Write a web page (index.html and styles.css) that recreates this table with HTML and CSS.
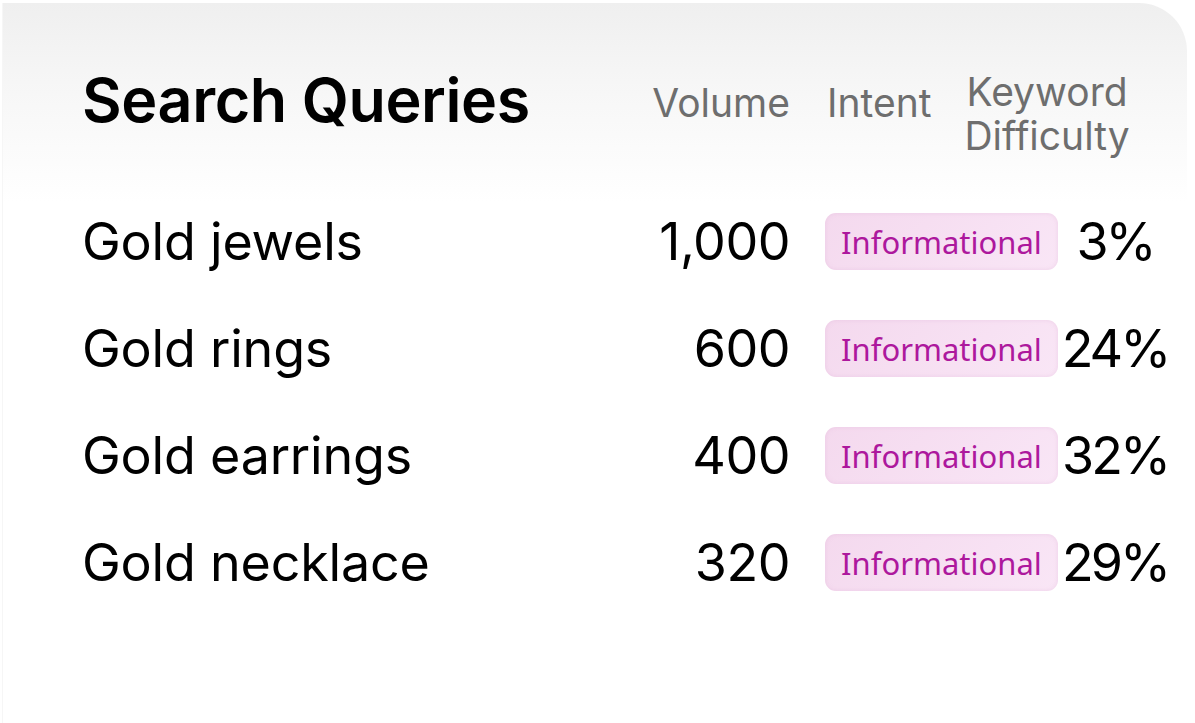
FILE: index.html
```html
<!DOCTYPE html>
<html>
<head>
<meta charset="utf-8">
<link rel="stylesheet" href="styles.css">
</head>
<body>
<div class="card">
  <div class="grid head">
    <h1 class="title">Search Queries</h1>
    <div class="h-vol">Volume</div>
    <div class="h-rest">
      <span class="h-intent">Intent</span>
      <span class="h-kd">Keyword<br>Difficulty</span>
    </div>
  </div>
  <div class="grid row">
    <div class="name">Gold jewels</div>
    <div class="vol">1,000</div>
    <div class="intent"><span class="pill">Informational</span></div>
    <div class="kd">3%</div>
  </div>
  <div class="grid row">
    <div class="name">Gold rings</div>
    <div class="vol">600</div>
    <div class="intent"><span class="pill">Informational</span></div>
    <div class="kd">24%</div>
  </div>
  <div class="grid row">
    <div class="name">Gold earrings</div>
    <div class="vol">400</div>
    <div class="intent"><span class="pill">Informational</span></div>
    <div class="kd">32%</div>
  </div>
  <div class="grid row">
    <div class="name">Gold necklace</div>
    <div class="vol">320</div>
    <div class="intent"><span class="pill">Informational</span></div>
    <div class="kd">29%</div>
  </div>
</div>
</body>
</html>
```
FILE: styles.css
```css
html, body {
  margin: 0;
  padding: 0;
  background: #ffffff;
}
body {
  font-family: Inter, "Liberation Sans", sans-serif;
  color: #000;
  width: 1195px;
  height: 723px;
  overflow: hidden;
}
.card {
  margin: 3px 0 0 2px;
  width: 1185px;
  height: 720px;
  border-top-right-radius: 48px;
  background: linear-gradient(180deg, #efefef 0px, #f7f7f7 90px, #ffffff 200px);
  box-shadow: inset 1px 0 0 #f6f6f6;
  box-sizing: border-box;
  padding-left: 80px;
}
.grid {
  display: grid;
  grid-template-columns: 560px 148px 268px 116px;
  align-items: center;
}
.head {
  height: 185px;
}
.title {
  margin: 0;
  font-size: 61px;
  font-weight: 600;
  letter-spacing: -0.4px;
  padding-top: 8px;
}
.h-vol {
  justify-self: end;
  font-size: 39px;
  color: #6e6e6e;
  padding-top: 14px;
}
.h-rest {
  grid-column: 3 / 5;
  display: flex;
  align-items: center;
  padding-left: 37px;
  gap: 33px;
  color: #6e6e6e;
  font-size: 39px;
}
.h-intent {
  padding-top: 14px;
}
.h-kd {
  text-align: center;
  line-height: 44px;
  padding-top: 36px;
}
.row {
  height: 107px;
  font-size: 52px;
}
.name {
  letter-spacing: -0.2px;
}
.vol {
  justify-self: end;
  letter-spacing: -0.5px;
}
.intent {
  justify-self: end;
}
.pill {
  display: flex;
  align-items: center;
  justify-content: center;
  width: 233px;
  height: 57px;
  border-radius: 11px;
  background: linear-gradient(135deg, #f4d9ee 0%, #f9e6f6 100%);
  box-shadow: inset 0 0 4px rgba(220, 170, 210, 0.35);
  color: #ad189d;
  font-family: "Noto Sans", "Open Sans", sans-serif;
  font-size: 31px;
}
.kd {
  text-align: center;
  letter-spacing: -3px;
  padding-right: 2px;
}
```
